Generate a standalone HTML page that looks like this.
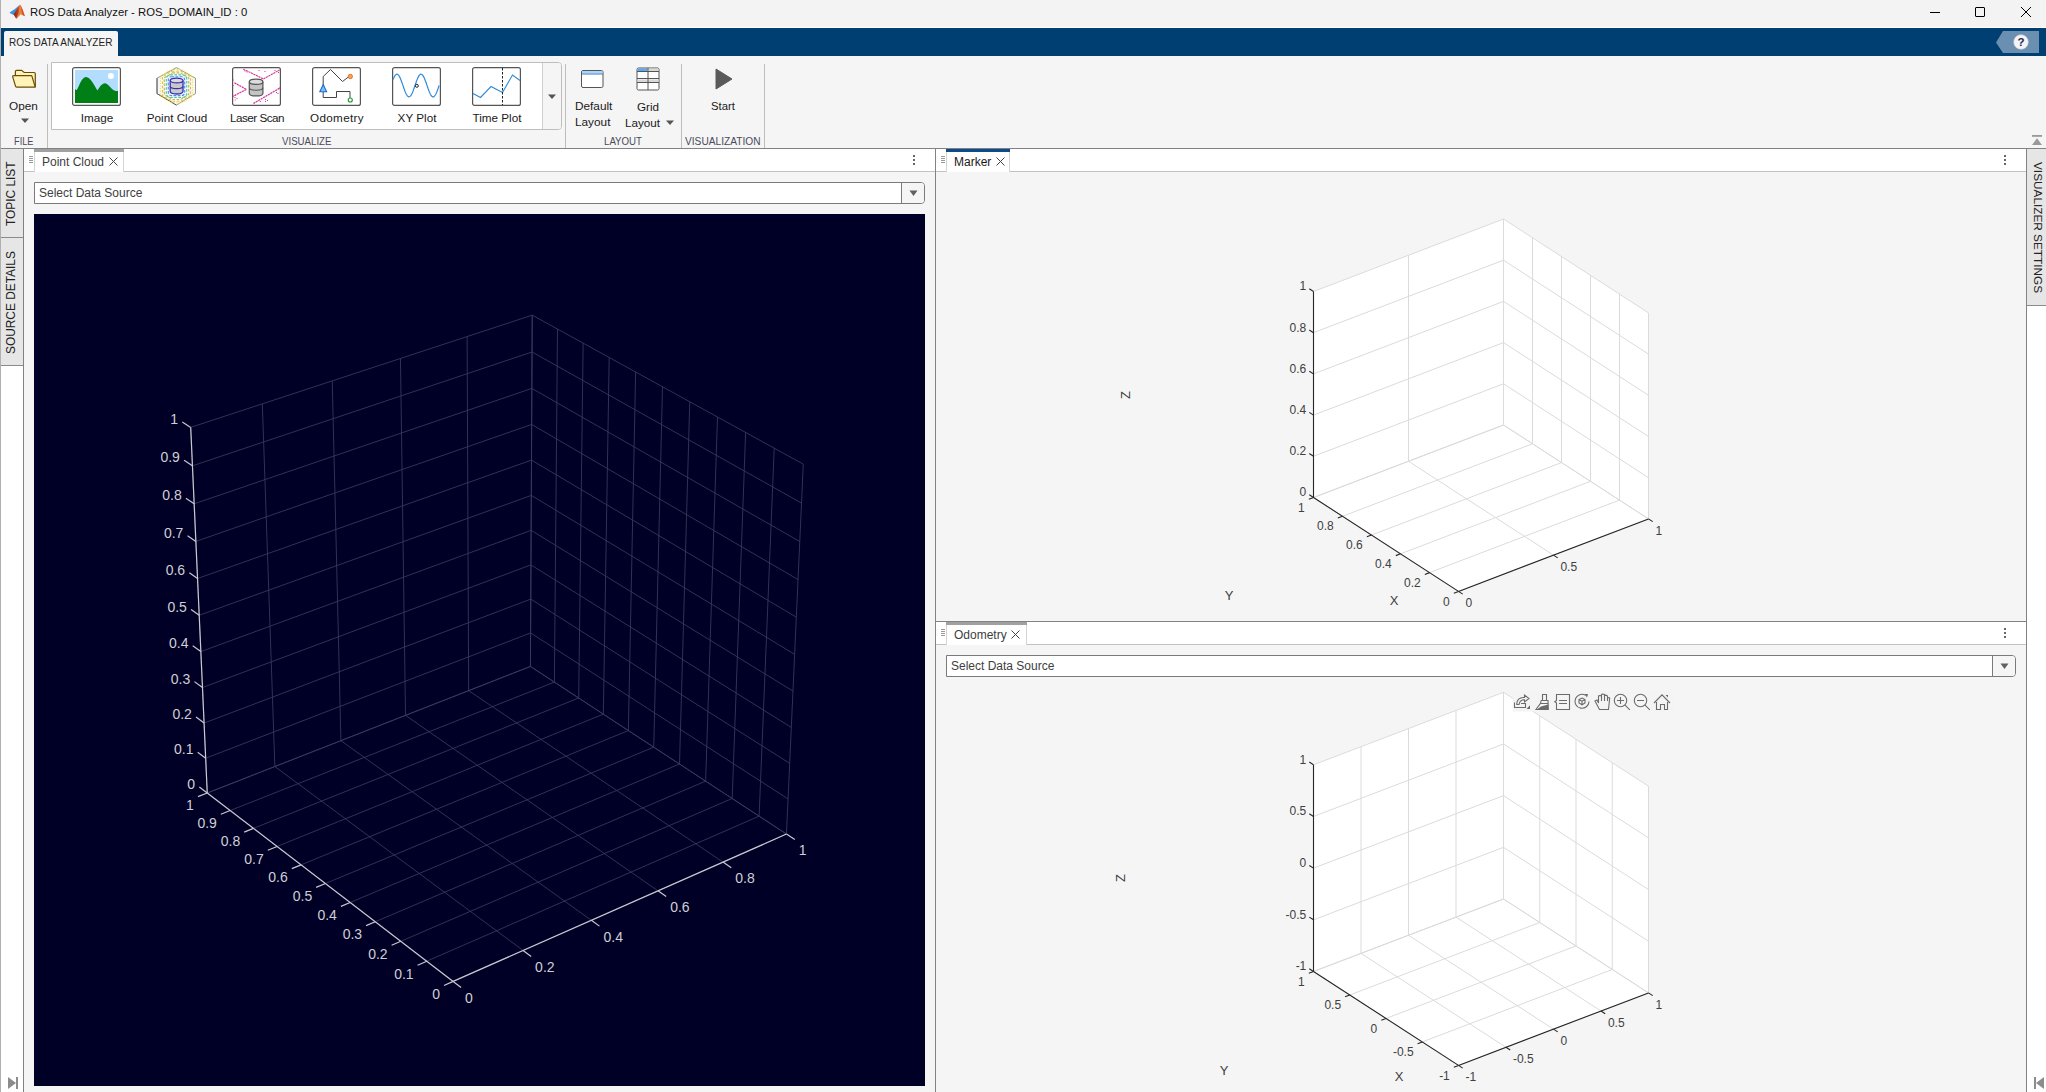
<!DOCTYPE html><html><head><meta charset="utf-8"><style>
*{margin:0;padding:0;box-sizing:border-box}
html,body{width:2046px;height:1092px;overflow:hidden;background:#f5f5f5;font-family:"Liberation Sans",sans-serif;color:#1a1a1a}
.a{position:absolute}
.t{position:absolute;white-space:nowrap;line-height:1}
</style></head><body>
<div class="a" style="left:0;top:0;width:2046px;height:27px;background:#f3f3f3"></div>
<div class="a" style="left:0;top:27px;width:2046px;height:1px;background:#ffffff"></div>
<svg class="a" style="left:6px;top:2px" width="24" height="20" viewBox="6 2 24 20">
<defs><linearGradient id="lg1" x1="0" y1="0" x2="1" y2="0"><stop offset="0" stop-color="#8a1c14"/><stop offset="0.55" stop-color="#c0401e"/><stop offset="1" stop-color="#ec8a3e"/></linearGradient></defs>
<path d="M9.4 12.7 C11 11.2 13 10.6 14.6 9.3 C16.5 7.8 18 6.2 19.5 5 L15.2 13.8 L13.8 15 C12.3 14.3 10.8 13.5 9.4 12.7 Z" fill="#3f92d8"/>
<path d="M13.6 14.6 L19.5 5 L21.5 9.5 L20.5 14.3 L16.2 18.8 C15.2 17.2 14.4 15.9 13.6 14.6 Z" fill="url(#lg1)"/>
<path d="M19.5 5 C20.2 4.6 20.6 5 21.3 6.2 C22.6 9.5 23.8 13 24.9 16.2 L20.4 14.2 L16.2 18.8 L18.8 12.5 Z" fill="#e9813c"/>
<path d="M21.3 6.2 C22.6 9.5 23.8 13 24.9 16.2 L22.8 15 L21.4 10 Z" fill="#d64f22"/>
</svg>
<div class="t" style="left:30px;top:7px;font-size:11.3px;color:#111">ROS Data Analyzer - ROS_DOMAIN_ID : 0</div>
<div class="a" style="left:1930px;top:12px;width:10px;height:1px;background:#000"></div>
<div class="a" style="left:1975px;top:7px;width:10px;height:10px;border:1px solid #000;border-radius:1px"></div>
<svg class="a" style="left:2020px;top:6px" width="12" height="12" viewBox="0 0 12 12"><path d="M1 1L11 11M11 1L1 11" stroke="#000" stroke-width="1"/></svg>
<div class="a" style="left:1px;top:28px;width:2045px;height:28px;background:#003f71"></div>
<div class="a" style="left:4px;top:31px;width:114px;height:25px;background:#f5f5f5;border-radius:2px 2px 0 0"></div>
<div class="t" style="left:9px;top:38px;font-size:10px;color:#222">ROS DATA ANALYZER</div>
<svg class="a" style="left:1995px;top:31px" width="45" height="23" viewBox="0 0 45 23">
<path d="M1 11.5 L8 0 L44 0 L44 22 L8 22 Z" fill="#6b8fb1"/>
<circle cx="26" cy="11" r="7.3" fill="#f4f4f6" stroke="#c8ccd6" stroke-width="0.6"/>
<text x="26" y="15.2" text-anchor="middle" font-family="Liberation Sans" font-weight="bold" font-size="11.5" fill="#1c2a4a">?</text>
</svg>
<div class="a" style="left:0;top:0;width:1px;height:1092px;background:#b0b0b0"></div>
<div class="a" style="left:1px;top:56px;width:2045px;height:92px;background:#f5f5f5"></div>
<div class="a" style="left:1px;top:148px;width:2045px;height:1px;background:#828282"></div>
<div class="a" style="left:47px;top:64px;width:1px;height:84px;background:#bdbdbd"></div>
<div class="a" style="left:565px;top:64px;width:1px;height:84px;background:#bdbdbd"></div>
<div class="a" style="left:681px;top:64px;width:1px;height:84px;background:#bdbdbd"></div>
<div class="a" style="left:764px;top:64px;width:1px;height:84px;background:#bdbdbd"></div>
<svg class="a" style="left:8px;top:64px" width="32" height="28" viewBox="0 0 32 28">
<path d="M7.4 12 L7.4 7.6 Q7.4 6.4 8.6 6.4 L13.6 6.4 L16.2 8.5 L26.1 8.5 Q27.3 8.5 27.3 9.7 L27.3 23" fill="#fff3b8" stroke="#6b4c00" stroke-width="1.2"/>
<path d="M4.7 12.8 Q4.5 11.7 5.7 11.7 L23.2 11.7 Q23.8 11.7 24 12.4 L27.2 23.1 L8.7 23.1 Q7.7 23.1 7.5 22.2 Z" fill="#fff3b8" stroke="#6b4c00" stroke-width="1.2" stroke-linejoin="round"/>
</svg>
<div class="t" style="left:9px;top:101px;font-size:11.8px">Open</div>
<svg class="a" style="left:20px;top:118px" width="10" height="6"><path d="M1 0.5L9 0.5L5 5Z" fill="#555"/></svg>
<div class="t" style="left:14px;top:136px;font-size:11px;color:#4a4a5a;transform:scaleX(0.84);transform-origin:0 0">FILE</div>
<div class="a" style="left:51px;top:62px;width:511px;height:68px;background:#fff;border:1px solid #bdbdbd;border-radius:0 4px 4px 0"></div>
<div class="a" style="left:542px;top:63px;width:19px;height:66px;background:#f5f5f5;border-left:1px solid #d0d0d0;border-radius:0 3px 3px 0"></div>
<svg class="a" style="left:547px;top:94px" width="10" height="6"><path d="M1 0.5L9 0.5L5 5Z" fill="#555"/></svg>
<svg class="a" style="left:72px;top:67px" width="49" height="39" viewBox="0 0 49 39">
<rect x="0.6" y="0.6" width="47.8" height="37.8" rx="2" fill="#fff" stroke="#555" stroke-width="1.2"/>
<rect x="3" y="3" width="43" height="33" fill="#b3ddfe"/>
<circle cx="38.9" cy="9.1" r="3" fill="#fff"/>
<path d="M3 22 C3.8 22.6 4.2 23.2 4.8 23 C7 20 9.5 10.2 13.9 10.1 C18.5 10 23 19.5 25.4 23.6 C27.5 20 30 16.2 32.9 16.2 C35.5 16.2 38.5 20.5 40.7 22.6 C42.5 24 44.5 24.2 46 24 L46 36 L3 36 Z" fill="#007f16"/>
</svg>
<svg class="a" style="left:156px;top:67px" width="41" height="39" viewBox="0 0 41 39">
<path d="M20.4 0.6 L39.5 11.2 L39.5 26.6 L20.4 38.1 L1 26.6 L1 11.2 Z" fill="#f6f6fb" stroke="#8a8a8a" stroke-width="0.9"/>
<path d="M1 11.2 L1 26.6 L20.4 38.1" fill="none" stroke="#555" stroke-width="0.9"/>
<path d="M15.38 2.60 L25.62 2.60 L36.50 9.10 L36.50 29.30 L25.62 35.80 L15.38 35.80 L4.50 29.30 L4.50 9.10 Z" fill="none" stroke="#f2ee30" stroke-width="1.1" stroke-dasharray="1.2 1.4" stroke-linejoin="round"/>
<path d="M16.02 4.20 L24.98 4.20 L34.50 9.70 L34.50 28.70 L24.98 34.20 L16.02 34.20 L6.50 28.70 L6.50 9.70 Z" fill="none" stroke="#f7b63e" stroke-width="1.1" stroke-dasharray="2.5 1.8" stroke-linejoin="round"/>
<path d="M16.60 5.90 L24.40 5.90 L32.70 10.90 L32.70 27.50 L24.40 32.50 L16.60 32.50 L8.30 27.50 L8.30 10.90 Z" fill="none" stroke="#a9c63e" stroke-width="1.1" stroke-dasharray="2.5 1.6" stroke-linejoin="round"/>
<rect x="10.30" y="7.90" width="20.40" height="22.60" rx="4.0" fill="none" stroke="#4ec79a" stroke-width="1.1" stroke-dasharray="2.6 1.5"/>
<rect x="12.30" y="9.80" width="16.40" height="18.80" rx="3.0" fill="none" stroke="#3d8ff5" stroke-width="1.1" stroke-dasharray="2.8 1.4"/>
<path d="M14.2 13.5 L14.2 24.6 A6.4 2.4 0 0 0 27 24.6 L27 13.5" fill="#c9c9c9" stroke="#3a2fb0" stroke-width="1.3"/>
<path d="M14.2 19.3 A6.4 2.4 0 0 0 27 19.3" fill="none" stroke="#3a2fb0" stroke-width="1.2"/>
<ellipse cx="20.6" cy="13.5" rx="6.4" ry="2.4" fill="#dadada" stroke="#3a2fb0" stroke-width="1.3"/>
</svg>
<svg class="a" style="left:232px;top:67px" width="49" height="39" viewBox="0 0 49 39">
<rect x="0.6" y="0.6" width="47.8" height="37.8" rx="2" fill="#fff" stroke="#555" stroke-width="1.2"/>
<path d="M11.3 2.2 L31.5 11.9 L47.6 3" fill="none" stroke="#d8309a" stroke-width="1.1" stroke-dasharray="2.2 0.6"/>
<path d="M2.4 15.8 L14.5 22.4 L1 29.3" fill="none" stroke="#d8309a" stroke-width="1.2" stroke-dasharray="2.2 0.6"/>
<path d="M21.4 36.5 L47.6 21.2" fill="none" stroke="#d8309a" stroke-width="1.2" stroke-dasharray="2.2 0.6"/>
<rect x="12.5" y="3.5" width="1" height="1" fill="#d8309a"/><rect x="14.5" y="4.5" width="1" height="1" fill="#d8309a"/><rect x="26.5" y="3.0" width="1" height="1" fill="#d8309a"/><rect x="32.5" y="4.0" width="1" height="1" fill="#d8309a"/><rect x="42.5" y="3.0" width="1" height="1" fill="#d8309a"/><rect x="46.0" y="5.0" width="1" height="1" fill="#d8309a"/><rect x="0.7" y="12.5" width="1" height="1" fill="#d8309a"/><rect x="0.7" y="18.0" width="1" height="1" fill="#d8309a"/><rect x="2.5" y="30.0" width="1" height="1" fill="#d8309a"/><rect x="4.5" y="31.0" width="1" height="1" fill="#d8309a"/><rect x="2.7" y="32.5" width="1" height="1" fill="#d8309a"/><rect x="27.8" y="34.0" width="1" height="1" fill="#d8309a"/><rect x="33.0" y="32.0" width="1" height="1" fill="#d8309a"/><rect x="33.0" y="34.0" width="1" height="1" fill="#d8309a"/><rect x="35.0" y="33.0" width="1" height="1" fill="#d8309a"/><rect x="44.0" y="25.0" width="1" height="1" fill="#d8309a"/><rect x="45.5" y="26.0" width="1" height="1" fill="#d8309a"/><rect x="47.0" y="20.5" width="1" height="1" fill="#d8309a"/>
<path d="M17.3 14.8 L17.3 26.4 A6.8 2.5 0 0 0 30.9 26.4 L30.9 14.8" fill="#c4c4c4" stroke="#555" stroke-width="1.2"/>
<path d="M17.3 20.8 A6.8 2.5 0 0 0 30.9 20.8" fill="none" stroke="#555" stroke-width="1.1"/>
<ellipse cx="24.1" cy="14.8" rx="6.8" ry="2.6" fill="#dcdcdc" stroke="#555" stroke-width="1.2"/>
</svg>
<svg class="a" style="left:312px;top:67px" width="49" height="39" viewBox="0 0 49 39">
<rect x="0.6" y="0.6" width="47.8" height="37.8" rx="2" fill="#fff" stroke="#555" stroke-width="1.2"/>
<path d="M11.2 25 L11.2 30.5 L24.5 30.5 L24.5 24.5 L38 24.5 L38 31" fill="none" stroke="#444" stroke-width="1"/>
<path d="M11.2 18 L11.2 9.5 L18.5 2.5 L30.5 14.5 L37 9.5" fill="none" stroke="#444" stroke-width="1"/>
<path d="M11.2 17.5 L14.6 24.8 L7.8 24.8 Z" fill="#7cc3f5" stroke="#1a6ad0" stroke-width="1.1"/>
<circle cx="38.3" cy="9.5" r="2.2" fill="#f0a060" stroke="#e8782e" stroke-width="1"/>
<circle cx="38.3" cy="33" r="2" fill="#fff" stroke="#2a9a3a" stroke-width="1.2"/>
</svg>
<svg class="a" style="left:392px;top:67px" width="49" height="39" viewBox="0 0 49 39">
<rect x="0.6" y="0.6" width="47.8" height="37.8" rx="2" fill="#fff" stroke="#555" stroke-width="1.2"/>
<polyline points="1.00,12.59 1.48,11.44 1.96,10.39 2.44,9.47 2.92,8.70 3.40,8.07 3.88,7.61 4.36,7.32 4.84,7.20 5.32,7.26 5.80,7.50 6.28,7.91 6.76,8.48 7.24,9.21 7.72,10.09 8.20,11.09 8.68,12.22 9.16,13.44 9.64,14.74 10.12,16.10 10.60,17.50 11.08,18.91 11.56,20.31 12.04,21.69 12.52,23.02 13.00,24.28 13.48,25.44 13.96,26.50 14.44,27.44 14.92,28.23 15.40,28.87 15.88,29.35 16.36,29.66 16.84,29.79 17.32,29.75 17.80,29.53 18.28,29.14 18.76,28.59 19.24,27.87 19.72,27.01 20.20,26.02 20.68,24.91 21.16,23.70 21.64,22.40 22.12,21.05 22.60,19.65 23.08,18.24 23.56,16.84 24.04,15.45 24.52,14.12 25.00,12.85 25.48,11.68 25.96,10.61 26.44,9.66 26.92,8.85 27.40,8.19 27.88,7.69 28.36,7.37 28.84,7.21 29.32,7.23 29.80,7.43 30.28,7.81 30.76,8.34 31.24,9.04 31.72,9.89 32.20,10.87 32.68,11.97 33.16,13.17 33.64,14.46 34.12,15.80 34.60,17.19 35.08,18.61 35.56,20.02 36.04,21.40 36.52,22.74 37.00,24.02 37.48,25.20 37.96,26.29 38.44,27.25 38.92,28.07 39.40,28.75 39.88,29.26 40.36,29.61 40.84,29.78 41.32,29.78 41.80,29.60 42.28,29.24 42.76,28.72 43.24,28.04 43.72,27.21 44.20,26.24 44.68,25.15 45.16,23.96 45.64,22.68 46.12,21.34 46.60,19.95 47.08,18.55" fill="none" stroke="#2f8bd8" stroke-width="1.2"/>
<circle cx="24.8" cy="18.8" r="1.5" fill="#fff" stroke="#222" stroke-width="1"/>
</svg>
<svg class="a" style="left:472px;top:67px" width="49" height="39" viewBox="0 0 49 39">
<rect x="0.6" y="0.6" width="47.8" height="37.8" rx="2" fill="#fff" stroke="#555" stroke-width="1.2"/>
<polyline points="1,26.5 8.5,30.5 19,19.5 30.5,25.5 40.5,8 48,13.5" fill="none" stroke="#2f8bd8" stroke-width="1.1"/>
<line x1="30.5" y1="1" x2="30.5" y2="38" stroke="#222" stroke-width="1" stroke-dasharray="2.5 1.5"/>
</svg>
<div class="t" style="left:97px;top:112px;width:80px;margin-left:-40px;text-align:center;font-size:11.7px;letter-spacing:0px">Image</div>
<div class="t" style="left:177px;top:112px;width:80px;margin-left:-40px;text-align:center;font-size:11.7px;letter-spacing:0px">Point Cloud</div>
<div class="t" style="left:257px;top:112px;width:80px;margin-left:-40px;text-align:center;font-size:11.7px;letter-spacing:-0.5px">Laser Scan</div>
<div class="t" style="left:337px;top:112px;width:80px;margin-left:-40px;text-align:center;font-size:11.7px;letter-spacing:0.32px">Odometry</div>
<div class="t" style="left:417px;top:112px;width:80px;margin-left:-40px;text-align:center;font-size:11.7px;letter-spacing:0px">XY Plot</div>
<div class="t" style="left:497px;top:112px;width:80px;margin-left:-40px;text-align:center;font-size:11.7px;letter-spacing:0px">Time Plot</div>
<div class="t" style="left:282px;top:136px;font-size:11px;color:#4a4a5a;transform:scaleX(0.88);transform-origin:0 0">VISUALIZE</div>
<svg class="a" style="left:580px;top:69px" width="25" height="20" viewBox="0 0 25 20">
<rect x="1.5" y="1.5" width="21.5" height="17" rx="1.5" fill="#fff" stroke="#555" stroke-width="1"/>
<rect x="2" y="2" width="20.5" height="2.5" fill="#a9d5fb"/>
<line x1="1.5" y1="5" x2="23" y2="5" stroke="#3a78c8" stroke-width="1"/>
</svg>
<div class="t" style="left:575px;top:101px;font-size:11.8px">Default</div>
<div class="t" style="left:575px;top:117px;font-size:11.8px">Layout</div>
<svg class="a" style="left:636px;top:67px" width="25" height="25" viewBox="0 0 25 25">
<rect x="1" y="1" width="22" height="22" rx="1.5" fill="#fff" stroke="#555" stroke-width="1"/>
<rect x="1.5" y="1.5" width="10" height="2.5" fill="#5aa8ee"/>
<rect x="12.5" y="1.5" width="10" height="2.5" fill="#d8d8d8"/>
<rect x="1.5" y="12.5" width="21" height="2.5" fill="#d8d8d8"/>
<line x1="1" y1="4.5" x2="23" y2="4.5" stroke="#555" stroke-width="1"/>
<line x1="1" y1="11.5" x2="23" y2="11.5" stroke="#555" stroke-width="1"/>
<line x1="1" y1="15.5" x2="23" y2="15.5" stroke="#555" stroke-width="1"/>
<line x1="12" y1="1" x2="12" y2="23" stroke="#555" stroke-width="1"/>
</svg>
<div class="t" style="left:637px;top:101px;font-size:11.7px">Grid</div>
<div class="t" style="left:625px;top:117px;font-size:11.7px">Layout</div>
<svg class="a" style="left:665px;top:120px" width="10" height="6"><path d="M1 0.5L9 0.5L5 5Z" fill="#555"/></svg>
<div class="t" style="left:604px;top:136px;font-size:11px;color:#4a4a5a;transform:scaleX(0.88);transform-origin:0 0">LAYOUT</div>
<svg class="a" style="left:714px;top:68px" width="20" height="22"><path d="M2 1L18 11L2 21Z" fill="#5a5a5a" stroke="#5a5a5a" stroke-width="1" stroke-linejoin="round"/></svg>
<div class="t" style="left:711px;top:101px;font-size:11.3px">Start</div>
<div class="t" style="left:685px;top:136px;font-size:11px;color:#4a4a5a;transform:scaleX(0.925);transform-origin:0 0">VISUALIZATION</div>
<svg class="a" style="left:2031px;top:135px" width="12" height="12"><rect x="1" y="0" width="10" height="1.8" fill="#999"/><path d="M1 10L11 10L6 3.2Z" fill="#999"/></svg>
<div class="a" style="left:1px;top:149px;width:22px;height:943px;background:#fff"></div>
<div class="a" style="left:1px;top:149px;width:22px;height:89px;background:#e6e6e6;border-bottom:1px solid #8a8a8a"></div>
<div class="a" style="left:1px;top:238px;width:22px;height:128px;background:#e6e6e6;border-bottom:1px solid #8a8a8a"></div>
<div class="a" style="left:23px;top:149px;width:1px;height:943px;background:#828282"></div>
<div class="t" style="left:5.5px;top:225.5px;font-size:11.9px;transform:rotate(-90deg);transform-origin:0 0;color:#222">TOPIC LIST</div>
<div class="t" style="left:5.5px;top:353.5px;font-size:11.9px;transform:rotate(-90deg);transform-origin:0 0;color:#222">SOURCE DETAILS</div>
<svg class="a" style="left:7px;top:1076px" width="12" height="14"><path d="M1 1L9 7L1 13Z" fill="#8c8c8c"/><rect x="9" y="1" width="2" height="12" fill="#8c8c8c"/></svg>
<div class="a" style="left:24px;top:149px;width:911px;height:23px;background:#fff;border-bottom:1px solid #c2c2c2"></div>
<div class="a" style="left:29px;top:156px;width:4px;height:1px;background:#9a9a9a"></div>
<div class="a" style="left:29px;top:158px;width:4px;height:1px;background:#9a9a9a"></div>
<div class="a" style="left:29px;top:160px;width:4px;height:1px;background:#9a9a9a"></div>
<div class="a" style="left:29px;top:162px;width:4px;height:1px;background:#9a9a9a"></div>
<div class="a" style="left:34px;top:149px;width:90px;height:23px;background:#fff;border-left:1px solid #d4d4d4;border-right:1px solid #d4d4d4"></div>
<div class="a" style="left:34px;top:149px;width:90px;height:3px;background:#a0a0a0"></div>
<div class="t" style="left:42px;top:156px;font-size:12px;color:#404040">Point Cloud</div>
<svg class="a" style="left:109px;top:157px" width="9" height="9"><path d="M0.5 0.5L8.5 8.5M8.5 0.5L0.5 8.5" stroke="#444" stroke-width="1"/></svg>
<div class="a" style="left:913px;top:155px;width:2px;height:2px;background:#666"></div>
<div class="a" style="left:913px;top:159px;width:2px;height:2px;background:#666"></div>
<div class="a" style="left:913px;top:163px;width:2px;height:2px;background:#666"></div>
<div class="a" style="left:34px;top:182px;width:891px;height:22px;background:#fff;border:1px solid #7a7a7a;border-radius:0 4px 4px 0"></div>
<div class="a" style="left:901px;top:183px;width:23px;height:20px;background:#f5f5f5;border-left:1px solid #7a7a7a;border-radius:0 3px 3px 0"></div>
<svg class="a" style="left:909px;top:190px" width="10" height="7"><path d="M0.5 0.5L8.5 0.5L4.5 6Z" fill="#606060"/></svg>
<div class="t" style="left:39px;top:187px;font-size:12px;color:#404040">Select Data Source</div>
<div class="a" style="left:935px;top:149px;width:1px;height:943px;background:#828282"></div>
<div class="a" style="left:936px;top:149px;width:1090px;height:23px;background:#fff;border-bottom:1px solid #c2c2c2"></div>
<div class="a" style="left:941px;top:156px;width:4px;height:1px;background:#9a9a9a"></div>
<div class="a" style="left:941px;top:158px;width:4px;height:1px;background:#9a9a9a"></div>
<div class="a" style="left:941px;top:160px;width:4px;height:1px;background:#9a9a9a"></div>
<div class="a" style="left:941px;top:162px;width:4px;height:1px;background:#9a9a9a"></div>
<div class="a" style="left:946px;top:149px;width:64px;height:23px;background:#fff;border-left:1px solid #d4d4d4;border-right:1px solid #d4d4d4"></div>
<div class="a" style="left:946px;top:149px;width:64px;height:3px;background:#0b4b8a"></div>
<div class="t" style="left:954px;top:156px;font-size:12px;color:#1a1a1a">Marker</div>
<svg class="a" style="left:996px;top:157px" width="9" height="9"><path d="M0.5 0.5L8.5 8.5M8.5 0.5L0.5 8.5" stroke="#444" stroke-width="1"/></svg>
<div class="a" style="left:2004px;top:155px;width:2px;height:2px;background:#666"></div>
<div class="a" style="left:2004px;top:159px;width:2px;height:2px;background:#666"></div>
<div class="a" style="left:2004px;top:163px;width:2px;height:2px;background:#666"></div>
<div class="a" style="left:936px;top:621px;width:1090px;height:1px;background:#828282"></div>
<div class="a" style="left:936px;top:622px;width:1090px;height:23px;background:#fff;border-bottom:1px solid #c2c2c2"></div>
<div class="a" style="left:941px;top:629px;width:4px;height:1px;background:#9a9a9a"></div>
<div class="a" style="left:941px;top:631px;width:4px;height:1px;background:#9a9a9a"></div>
<div class="a" style="left:941px;top:633px;width:4px;height:1px;background:#9a9a9a"></div>
<div class="a" style="left:941px;top:635px;width:4px;height:1px;background:#9a9a9a"></div>
<div class="a" style="left:946px;top:622px;width:81px;height:23px;background:#fff;border-left:1px solid #d4d4d4;border-right:1px solid #d4d4d4"></div>
<div class="a" style="left:946px;top:622px;width:81px;height:3px;background:#a0a0a0"></div>
<div class="t" style="left:954px;top:629px;font-size:12px;color:#404040">Odometry</div>
<svg class="a" style="left:1011px;top:630px" width="9" height="9"><path d="M0.5 0.5L8.5 8.5M8.5 0.5L0.5 8.5" stroke="#444" stroke-width="1"/></svg>
<div class="a" style="left:2004px;top:628px;width:2px;height:2px;background:#666"></div>
<div class="a" style="left:2004px;top:632px;width:2px;height:2px;background:#666"></div>
<div class="a" style="left:2004px;top:636px;width:2px;height:2px;background:#666"></div>
<div class="a" style="left:946px;top:655px;width:1070px;height:22px;background:#fff;border:1px solid #7a7a7a;border-radius:0 4px 4px 0"></div>
<div class="a" style="left:1992px;top:656px;width:23px;height:20px;background:#f5f5f5;border-left:1px solid #7a7a7a;border-radius:0 3px 3px 0"></div>
<svg class="a" style="left:2000px;top:663px" width="10" height="7"><path d="M0.5 0.5L8.5 0.5L4.5 6Z" fill="#606060"/></svg>
<div class="t" style="left:951px;top:660px;font-size:12px;color:#404040">Select Data Source</div>
<div class="a" style="left:2026px;top:149px;width:1px;height:943px;background:#828282"></div>
<div class="a" style="left:2027px;top:149px;width:19px;height:943px;background:#fff"></div>
<div class="a" style="left:2027px;top:149px;width:19px;height:157px;background:#e6e6e6;border-bottom:1px solid #8a8a8a"></div>
<div class="t" style="left:2043px;top:162px;font-size:11.8px;transform:rotate(90deg);transform-origin:0 0;color:#222">VISUALIZER SETTINGS</div>
<svg class="a" style="left:2033px;top:1076px" width="12" height="14"><path d="M11 1L3 7L11 13Z" fill="#8c8c8c"/><rect x="1" y="1" width="2" height="12" fill="#8c8c8c"/></svg>
<svg class="a" style="left:0;top:0" width="2046" height="1092" viewBox="0 0 2046 1092">
<rect x="34" y="214" width="891" height="872" fill="#000026"/>
<line x1="207.25" y1="793.00" x2="530.43" y2="666.44" stroke="#3a3a5c" stroke-width="0.85"/>
<line x1="786.46" y1="834.05" x2="530.43" y2="666.44" stroke="#3a3a5c" stroke-width="0.85"/>
<line x1="205.68" y1="758.23" x2="530.60" y2="632.93" stroke="#3a3a5c" stroke-width="0.85"/>
<line x1="788.06" y1="798.90" x2="530.60" y2="632.93" stroke="#3a3a5c" stroke-width="0.85"/>
<line x1="204.09" y1="723.07" x2="530.77" y2="599.08" stroke="#3a3a5c" stroke-width="0.85"/>
<line x1="789.68" y1="763.36" x2="530.77" y2="599.08" stroke="#3a3a5c" stroke-width="0.85"/>
<line x1="202.48" y1="687.53" x2="530.95" y2="564.88" stroke="#3a3a5c" stroke-width="0.85"/>
<line x1="791.32" y1="727.42" x2="530.95" y2="564.88" stroke="#3a3a5c" stroke-width="0.85"/>
<line x1="200.85" y1="651.60" x2="531.12" y2="530.32" stroke="#3a3a5c" stroke-width="0.85"/>
<line x1="792.97" y1="691.08" x2="531.12" y2="530.32" stroke="#3a3a5c" stroke-width="0.85"/>
<line x1="199.21" y1="615.27" x2="531.30" y2="495.40" stroke="#3a3a5c" stroke-width="0.85"/>
<line x1="794.64" y1="654.33" x2="531.30" y2="495.40" stroke="#3a3a5c" stroke-width="0.85"/>
<line x1="197.54" y1="578.53" x2="531.48" y2="460.11" stroke="#3a3a5c" stroke-width="0.85"/>
<line x1="796.33" y1="617.16" x2="531.48" y2="460.11" stroke="#3a3a5c" stroke-width="0.85"/>
<line x1="195.86" y1="541.38" x2="531.66" y2="424.45" stroke="#3a3a5c" stroke-width="0.85"/>
<line x1="798.04" y1="579.56" x2="531.66" y2="424.45" stroke="#3a3a5c" stroke-width="0.85"/>
<line x1="194.16" y1="503.82" x2="531.85" y2="388.41" stroke="#3a3a5c" stroke-width="0.85"/>
<line x1="799.77" y1="541.53" x2="531.85" y2="388.41" stroke="#3a3a5c" stroke-width="0.85"/>
<line x1="192.44" y1="465.82" x2="532.03" y2="351.98" stroke="#3a3a5c" stroke-width="0.85"/>
<line x1="801.52" y1="503.07" x2="532.03" y2="351.98" stroke="#3a3a5c" stroke-width="0.85"/>
<line x1="190.70" y1="427.39" x2="532.22" y2="315.16" stroke="#3a3a5c" stroke-width="0.85"/>
<line x1="803.29" y1="464.15" x2="532.22" y2="315.16" stroke="#3a3a5c" stroke-width="0.85"/>
<line x1="207.25" y1="793.00" x2="190.70" y2="427.39" stroke="#3a3a5c" stroke-width="0.85"/>
<line x1="453.14" y1="981.40" x2="207.25" y2="793.00" stroke="#3a3a5c" stroke-width="0.85"/>
<line x1="274.86" y1="766.52" x2="262.32" y2="403.86" stroke="#3a3a5c" stroke-width="0.85"/>
<line x1="523.11" y1="950.47" x2="274.86" y2="766.52" stroke="#3a3a5c" stroke-width="0.85"/>
<line x1="340.92" y1="740.65" x2="332.22" y2="380.89" stroke="#3a3a5c" stroke-width="0.85"/>
<line x1="591.37" y1="920.30" x2="340.92" y2="740.65" stroke="#3a3a5c" stroke-width="0.85"/>
<line x1="405.51" y1="715.36" x2="400.46" y2="358.46" stroke="#3a3a5c" stroke-width="0.85"/>
<line x1="657.97" y1="890.86" x2="405.51" y2="715.36" stroke="#3a3a5c" stroke-width="0.85"/>
<line x1="468.66" y1="690.63" x2="467.11" y2="336.56" stroke="#3a3a5c" stroke-width="0.85"/>
<line x1="722.99" y1="862.12" x2="468.66" y2="690.63" stroke="#3a3a5c" stroke-width="0.85"/>
<line x1="530.43" y1="666.44" x2="532.22" y2="315.16" stroke="#3a3a5c" stroke-width="0.85"/>
<line x1="786.46" y1="834.05" x2="530.43" y2="666.44" stroke="#3a3a5c" stroke-width="0.85"/>
<line x1="786.46" y1="834.05" x2="803.29" y2="464.15" stroke="#3a3a5c" stroke-width="0.85"/>
<line x1="453.14" y1="981.40" x2="786.46" y2="834.05" stroke="#3a3a5c" stroke-width="0.85"/>
<line x1="759.12" y1="816.15" x2="774.23" y2="448.18" stroke="#3a3a5c" stroke-width="0.85"/>
<line x1="426.77" y1="961.20" x2="759.12" y2="816.15" stroke="#3a3a5c" stroke-width="0.85"/>
<line x1="732.18" y1="798.51" x2="745.63" y2="432.46" stroke="#3a3a5c" stroke-width="0.85"/>
<line x1="400.82" y1="941.32" x2="732.18" y2="798.51" stroke="#3a3a5c" stroke-width="0.85"/>
<line x1="705.64" y1="781.14" x2="717.48" y2="416.99" stroke="#3a3a5c" stroke-width="0.85"/>
<line x1="375.28" y1="921.75" x2="705.64" y2="781.14" stroke="#3a3a5c" stroke-width="0.85"/>
<line x1="679.50" y1="764.03" x2="689.77" y2="401.76" stroke="#3a3a5c" stroke-width="0.85"/>
<line x1="350.15" y1="902.49" x2="679.50" y2="764.03" stroke="#3a3a5c" stroke-width="0.85"/>
<line x1="653.74" y1="747.17" x2="662.49" y2="386.76" stroke="#3a3a5c" stroke-width="0.85"/>
<line x1="325.40" y1="883.53" x2="653.74" y2="747.17" stroke="#3a3a5c" stroke-width="0.85"/>
<line x1="628.36" y1="730.55" x2="635.64" y2="372.00" stroke="#3a3a5c" stroke-width="0.85"/>
<line x1="301.04" y1="864.86" x2="628.36" y2="730.55" stroke="#3a3a5c" stroke-width="0.85"/>
<line x1="603.34" y1="714.17" x2="609.19" y2="357.47" stroke="#3a3a5c" stroke-width="0.85"/>
<line x1="277.06" y1="846.48" x2="603.34" y2="714.17" stroke="#3a3a5c" stroke-width="0.85"/>
<line x1="578.69" y1="698.03" x2="583.14" y2="343.15" stroke="#3a3a5c" stroke-width="0.85"/>
<line x1="253.43" y1="828.38" x2="578.69" y2="698.03" stroke="#3a3a5c" stroke-width="0.85"/>
<line x1="554.39" y1="682.12" x2="557.49" y2="329.05" stroke="#3a3a5c" stroke-width="0.85"/>
<line x1="230.17" y1="810.56" x2="554.39" y2="682.12" stroke="#3a3a5c" stroke-width="0.85"/>
<line x1="530.43" y1="666.44" x2="532.22" y2="315.16" stroke="#3a3a5c" stroke-width="0.85"/>
<line x1="207.25" y1="793.00" x2="530.43" y2="666.44" stroke="#3a3a5c" stroke-width="0.85"/>
<line x1="207.25" y1="793.00" x2="190.70" y2="427.39" stroke="#c8c8d0" stroke-width="1.2"/>
<line x1="453.14" y1="981.40" x2="207.25" y2="793.00" stroke="#c8c8d0" stroke-width="1.2"/>
<line x1="453.14" y1="981.40" x2="786.46" y2="834.05" stroke="#c8c8d0" stroke-width="1.2"/>
<line x1="207.25" y1="793.00" x2="199.32" y2="786.92" stroke="#c8c8d0" stroke-width="1.2"/>
<line x1="205.68" y1="758.23" x2="197.70" y2="752.20" stroke="#c8c8d0" stroke-width="1.2"/>
<line x1="204.09" y1="723.07" x2="196.06" y2="717.10" stroke="#c8c8d0" stroke-width="1.2"/>
<line x1="202.48" y1="687.53" x2="194.41" y2="681.62" stroke="#c8c8d0" stroke-width="1.2"/>
<line x1="200.85" y1="651.60" x2="192.74" y2="645.75" stroke="#c8c8d0" stroke-width="1.2"/>
<line x1="199.21" y1="615.27" x2="191.05" y2="609.48" stroke="#c8c8d0" stroke-width="1.2"/>
<line x1="197.54" y1="578.53" x2="189.34" y2="572.81" stroke="#c8c8d0" stroke-width="1.2"/>
<line x1="195.86" y1="541.38" x2="187.61" y2="535.73" stroke="#c8c8d0" stroke-width="1.2"/>
<line x1="194.16" y1="503.82" x2="185.87" y2="498.23" stroke="#c8c8d0" stroke-width="1.2"/>
<line x1="192.44" y1="465.82" x2="184.10" y2="460.30" stroke="#c8c8d0" stroke-width="1.2"/>
<line x1="190.70" y1="427.39" x2="182.31" y2="421.95" stroke="#c8c8d0" stroke-width="1.2"/>
<line x1="453.14" y1="981.40" x2="443.99" y2="985.45" stroke="#c8c8d0" stroke-width="1.2"/>
<line x1="426.77" y1="961.20" x2="417.60" y2="965.20" stroke="#c8c8d0" stroke-width="1.2"/>
<line x1="400.82" y1="941.32" x2="391.64" y2="945.27" stroke="#c8c8d0" stroke-width="1.2"/>
<line x1="375.28" y1="921.75" x2="366.08" y2="925.66" stroke="#c8c8d0" stroke-width="1.2"/>
<line x1="350.15" y1="902.49" x2="340.93" y2="906.36" stroke="#c8c8d0" stroke-width="1.2"/>
<line x1="325.40" y1="883.53" x2="316.17" y2="887.36" stroke="#c8c8d0" stroke-width="1.2"/>
<line x1="301.04" y1="864.86" x2="291.79" y2="868.66" stroke="#c8c8d0" stroke-width="1.2"/>
<line x1="277.06" y1="846.48" x2="267.79" y2="850.24" stroke="#c8c8d0" stroke-width="1.2"/>
<line x1="253.43" y1="828.38" x2="244.15" y2="832.10" stroke="#c8c8d0" stroke-width="1.2"/>
<line x1="230.17" y1="810.56" x2="220.87" y2="814.24" stroke="#c8c8d0" stroke-width="1.2"/>
<line x1="207.25" y1="793.00" x2="197.94" y2="796.64" stroke="#c8c8d0" stroke-width="1.2"/>
<line x1="453.14" y1="981.40" x2="461.08" y2="987.49" stroke="#c8c8d0" stroke-width="1.2"/>
<line x1="523.11" y1="950.47" x2="531.15" y2="956.43" stroke="#c8c8d0" stroke-width="1.2"/>
<line x1="591.37" y1="920.30" x2="599.49" y2="926.13" stroke="#c8c8d0" stroke-width="1.2"/>
<line x1="657.97" y1="890.86" x2="666.18" y2="896.56" stroke="#c8c8d0" stroke-width="1.2"/>
<line x1="722.99" y1="862.12" x2="731.28" y2="867.71" stroke="#c8c8d0" stroke-width="1.2"/>
<line x1="786.46" y1="834.05" x2="794.83" y2="839.53" stroke="#c8c8d0" stroke-width="1.2"/>
<text x="195.1" y="788.9" text-anchor="end" font-family="Liberation Sans" font-size="14" fill="#cfcfd4">0</text>
<text x="193.5" y="754.2" text-anchor="end" font-family="Liberation Sans" font-size="14" fill="#cfcfd4">0.1</text>
<text x="191.9" y="719.1" text-anchor="end" font-family="Liberation Sans" font-size="14" fill="#cfcfd4">0.2</text>
<text x="190.2" y="683.6" text-anchor="end" font-family="Liberation Sans" font-size="14" fill="#cfcfd4">0.3</text>
<text x="188.5" y="647.8" text-anchor="end" font-family="Liberation Sans" font-size="14" fill="#cfcfd4">0.4</text>
<text x="186.9" y="611.5" text-anchor="end" font-family="Liberation Sans" font-size="14" fill="#cfcfd4">0.5</text>
<text x="185.1" y="574.8" text-anchor="end" font-family="Liberation Sans" font-size="14" fill="#cfcfd4">0.6</text>
<text x="183.4" y="537.7" text-anchor="end" font-family="Liberation Sans" font-size="14" fill="#cfcfd4">0.7</text>
<text x="181.7" y="500.2" text-anchor="end" font-family="Liberation Sans" font-size="14" fill="#cfcfd4">0.8</text>
<text x="179.9" y="462.3" text-anchor="end" font-family="Liberation Sans" font-size="14" fill="#cfcfd4">0.9</text>
<text x="178.1" y="423.9" text-anchor="end" font-family="Liberation Sans" font-size="14" fill="#cfcfd4">1</text>
<text x="440.0" y="999.0" text-anchor="end" font-family="Liberation Sans" font-size="14" fill="#cfcfd4">0</text>
<text x="413.6" y="978.8" text-anchor="end" font-family="Liberation Sans" font-size="14" fill="#cfcfd4">0.1</text>
<text x="387.6" y="958.9" text-anchor="end" font-family="Liberation Sans" font-size="14" fill="#cfcfd4">0.2</text>
<text x="362.1" y="939.3" text-anchor="end" font-family="Liberation Sans" font-size="14" fill="#cfcfd4">0.3</text>
<text x="336.9" y="920.0" text-anchor="end" font-family="Liberation Sans" font-size="14" fill="#cfcfd4">0.4</text>
<text x="312.2" y="901.0" text-anchor="end" font-family="Liberation Sans" font-size="14" fill="#cfcfd4">0.5</text>
<text x="287.8" y="882.3" text-anchor="end" font-family="Liberation Sans" font-size="14" fill="#cfcfd4">0.6</text>
<text x="263.8" y="863.8" text-anchor="end" font-family="Liberation Sans" font-size="14" fill="#cfcfd4">0.7</text>
<text x="240.2" y="845.7" text-anchor="end" font-family="Liberation Sans" font-size="14" fill="#cfcfd4">0.8</text>
<text x="216.9" y="827.8" text-anchor="end" font-family="Liberation Sans" font-size="14" fill="#cfcfd4">0.9</text>
<text x="193.9" y="810.2" text-anchor="end" font-family="Liberation Sans" font-size="14" fill="#cfcfd4">1</text>
<text x="465.1" y="1003.0" text-anchor="start" font-family="Liberation Sans" font-size="14" fill="#cfcfd4">0</text>
<text x="535.1" y="971.9" text-anchor="start" font-family="Liberation Sans" font-size="14" fill="#cfcfd4">0.2</text>
<text x="603.5" y="941.6" text-anchor="start" font-family="Liberation Sans" font-size="14" fill="#cfcfd4">0.4</text>
<text x="670.2" y="912.1" text-anchor="start" font-family="Liberation Sans" font-size="14" fill="#cfcfd4">0.6</text>
<text x="735.3" y="883.2" text-anchor="start" font-family="Liberation Sans" font-size="14" fill="#cfcfd4">0.8</text>
<text x="798.8" y="855.0" text-anchor="start" font-family="Liberation Sans" font-size="14" fill="#cfcfd4">1</text>
</svg>
<svg class="a" style="left:0;top:0" width="2046" height="1092" viewBox="0 0 2046 1092">
<polygon points="1313.50,497.50 1313.50,291.50 1503.50,219.00 1648.50,312.90 1648.50,518.90 1458.50,591.40" fill="#fff"/>
<line x1="1313.50" y1="497.50" x2="1503.50" y2="425.00" stroke="#dbdbdb" stroke-width="1"/>
<line x1="1648.50" y1="518.90" x2="1503.50" y2="425.00" stroke="#dbdbdb" stroke-width="1"/>
<line x1="1313.50" y1="456.30" x2="1503.50" y2="383.80" stroke="#dbdbdb" stroke-width="1"/>
<line x1="1648.50" y1="477.70" x2="1503.50" y2="383.80" stroke="#dbdbdb" stroke-width="1"/>
<line x1="1313.50" y1="415.10" x2="1503.50" y2="342.60" stroke="#dbdbdb" stroke-width="1"/>
<line x1="1648.50" y1="436.50" x2="1503.50" y2="342.60" stroke="#dbdbdb" stroke-width="1"/>
<line x1="1313.50" y1="373.90" x2="1503.50" y2="301.40" stroke="#dbdbdb" stroke-width="1"/>
<line x1="1648.50" y1="395.30" x2="1503.50" y2="301.40" stroke="#dbdbdb" stroke-width="1"/>
<line x1="1313.50" y1="332.70" x2="1503.50" y2="260.20" stroke="#dbdbdb" stroke-width="1"/>
<line x1="1648.50" y1="354.10" x2="1503.50" y2="260.20" stroke="#dbdbdb" stroke-width="1"/>
<line x1="1313.50" y1="291.50" x2="1503.50" y2="219.00" stroke="#dbdbdb" stroke-width="1"/>
<line x1="1648.50" y1="312.90" x2="1503.50" y2="219.00" stroke="#dbdbdb" stroke-width="1"/>
<line x1="1313.50" y1="497.50" x2="1313.50" y2="291.50" stroke="#dbdbdb" stroke-width="1"/>
<line x1="1458.50" y1="591.40" x2="1313.50" y2="497.50" stroke="#dbdbdb" stroke-width="1"/>
<line x1="1408.50" y1="461.25" x2="1408.50" y2="255.25" stroke="#dbdbdb" stroke-width="1"/>
<line x1="1553.50" y1="555.15" x2="1408.50" y2="461.25" stroke="#dbdbdb" stroke-width="1"/>
<line x1="1503.50" y1="425.00" x2="1503.50" y2="219.00" stroke="#dbdbdb" stroke-width="1"/>
<line x1="1648.50" y1="518.90" x2="1503.50" y2="425.00" stroke="#dbdbdb" stroke-width="1"/>
<line x1="1648.50" y1="518.90" x2="1648.50" y2="312.90" stroke="#dbdbdb" stroke-width="1"/>
<line x1="1458.50" y1="591.40" x2="1648.50" y2="518.90" stroke="#dbdbdb" stroke-width="1"/>
<line x1="1619.50" y1="500.12" x2="1619.50" y2="294.12" stroke="#dbdbdb" stroke-width="1"/>
<line x1="1429.50" y1="572.62" x2="1619.50" y2="500.12" stroke="#dbdbdb" stroke-width="1"/>
<line x1="1590.50" y1="481.34" x2="1590.50" y2="275.34" stroke="#dbdbdb" stroke-width="1"/>
<line x1="1400.50" y1="553.84" x2="1590.50" y2="481.34" stroke="#dbdbdb" stroke-width="1"/>
<line x1="1561.50" y1="462.56" x2="1561.50" y2="256.56" stroke="#dbdbdb" stroke-width="1"/>
<line x1="1371.50" y1="535.06" x2="1561.50" y2="462.56" stroke="#dbdbdb" stroke-width="1"/>
<line x1="1532.50" y1="443.78" x2="1532.50" y2="237.78" stroke="#dbdbdb" stroke-width="1"/>
<line x1="1342.50" y1="516.28" x2="1532.50" y2="443.78" stroke="#dbdbdb" stroke-width="1"/>
<line x1="1503.50" y1="425.00" x2="1503.50" y2="219.00" stroke="#dbdbdb" stroke-width="1"/>
<line x1="1313.50" y1="497.50" x2="1503.50" y2="425.00" stroke="#dbdbdb" stroke-width="1"/>
<line x1="1313.50" y1="497.50" x2="1313.50" y2="291.50" stroke="#262626" stroke-width="1.1"/>
<line x1="1458.50" y1="591.40" x2="1313.50" y2="497.50" stroke="#262626" stroke-width="1.1"/>
<line x1="1458.50" y1="591.40" x2="1648.50" y2="518.90" stroke="#262626" stroke-width="1.1"/>
<line x1="1313.50" y1="497.50" x2="1309.30" y2="494.78" stroke="#262626" stroke-width="1.1"/>
<line x1="1313.50" y1="456.30" x2="1309.30" y2="453.58" stroke="#262626" stroke-width="1.1"/>
<line x1="1313.50" y1="415.10" x2="1309.30" y2="412.38" stroke="#262626" stroke-width="1.1"/>
<line x1="1313.50" y1="373.90" x2="1309.30" y2="371.18" stroke="#262626" stroke-width="1.1"/>
<line x1="1313.50" y1="332.70" x2="1309.30" y2="329.98" stroke="#262626" stroke-width="1.1"/>
<line x1="1313.50" y1="291.50" x2="1309.30" y2="288.78" stroke="#262626" stroke-width="1.1"/>
<line x1="1458.50" y1="591.40" x2="1453.83" y2="593.18" stroke="#262626" stroke-width="1.1"/>
<line x1="1429.50" y1="572.62" x2="1424.83" y2="574.40" stroke="#262626" stroke-width="1.1"/>
<line x1="1400.50" y1="553.84" x2="1395.83" y2="555.62" stroke="#262626" stroke-width="1.1"/>
<line x1="1371.50" y1="535.06" x2="1366.83" y2="536.84" stroke="#262626" stroke-width="1.1"/>
<line x1="1342.50" y1="516.28" x2="1337.83" y2="518.06" stroke="#262626" stroke-width="1.1"/>
<line x1="1313.50" y1="497.50" x2="1308.83" y2="499.28" stroke="#262626" stroke-width="1.1"/>
<line x1="1458.50" y1="591.40" x2="1462.70" y2="594.12" stroke="#262626" stroke-width="1.1"/>
<line x1="1553.50" y1="555.15" x2="1557.70" y2="557.87" stroke="#262626" stroke-width="1.1"/>
<line x1="1648.50" y1="518.90" x2="1652.70" y2="521.62" stroke="#262626" stroke-width="1.1"/>
<text x="1306.3" y="496.3" text-anchor="end" font-family="Liberation Sans" font-size="12" fill="#404040">0</text>
<text x="1306.3" y="455.1" text-anchor="end" font-family="Liberation Sans" font-size="12" fill="#404040">0.2</text>
<text x="1306.3" y="413.9" text-anchor="end" font-family="Liberation Sans" font-size="12" fill="#404040">0.4</text>
<text x="1306.3" y="372.7" text-anchor="end" font-family="Liberation Sans" font-size="12" fill="#404040">0.6</text>
<text x="1306.3" y="331.5" text-anchor="end" font-family="Liberation Sans" font-size="12" fill="#404040">0.8</text>
<text x="1306.3" y="290.3" text-anchor="end" font-family="Liberation Sans" font-size="12" fill="#404040">1</text>
<text x="1449.8" y="605.5" text-anchor="end" font-family="Liberation Sans" font-size="12" fill="#404040">0</text>
<text x="1420.8" y="586.7" text-anchor="end" font-family="Liberation Sans" font-size="12" fill="#404040">0.2</text>
<text x="1391.8" y="567.9" text-anchor="end" font-family="Liberation Sans" font-size="12" fill="#404040">0.4</text>
<text x="1362.8" y="549.1" text-anchor="end" font-family="Liberation Sans" font-size="12" fill="#404040">0.6</text>
<text x="1333.8" y="530.4" text-anchor="end" font-family="Liberation Sans" font-size="12" fill="#404040">0.8</text>
<text x="1304.8" y="511.6" text-anchor="end" font-family="Liberation Sans" font-size="12" fill="#404040">1</text>
<text x="1465.4" y="607.0" text-anchor="start" font-family="Liberation Sans" font-size="12" fill="#404040">0</text>
<text x="1560.4" y="570.8" text-anchor="start" font-family="Liberation Sans" font-size="12" fill="#404040">0.5</text>
<text x="1655.4" y="534.5" text-anchor="start" font-family="Liberation Sans" font-size="12" fill="#404040">1</text>
<text x="0" y="4.7" transform="translate(1125 395) rotate(-90)" text-anchor="middle" font-family="Liberation Sans" font-size="13" fill="#404040">Z</text>
<text x="1229.0" y="599.7" text-anchor="middle" font-family="Liberation Sans" font-size="13" fill="#404040">Y</text>
<text x="1394.0" y="605.2" text-anchor="middle" font-family="Liberation Sans" font-size="13" fill="#404040">X</text>
</svg>
<svg class="a" style="left:0;top:0" width="2046" height="1092" viewBox="0 0 2046 1092">
<polygon points="1313.50,971.50 1313.50,764.80 1503.50,692.30 1648.50,786.20 1648.50,992.90 1458.50,1065.40" fill="#fff"/>
<line x1="1313.50" y1="971.50" x2="1503.50" y2="899.00" stroke="#dbdbdb" stroke-width="1"/>
<line x1="1648.50" y1="992.90" x2="1503.50" y2="899.00" stroke="#dbdbdb" stroke-width="1"/>
<line x1="1313.50" y1="919.83" x2="1503.50" y2="847.33" stroke="#dbdbdb" stroke-width="1"/>
<line x1="1648.50" y1="941.23" x2="1503.50" y2="847.33" stroke="#dbdbdb" stroke-width="1"/>
<line x1="1313.50" y1="868.15" x2="1503.50" y2="795.65" stroke="#dbdbdb" stroke-width="1"/>
<line x1="1648.50" y1="889.55" x2="1503.50" y2="795.65" stroke="#dbdbdb" stroke-width="1"/>
<line x1="1313.50" y1="816.48" x2="1503.50" y2="743.98" stroke="#dbdbdb" stroke-width="1"/>
<line x1="1648.50" y1="837.88" x2="1503.50" y2="743.98" stroke="#dbdbdb" stroke-width="1"/>
<line x1="1313.50" y1="764.80" x2="1503.50" y2="692.30" stroke="#dbdbdb" stroke-width="1"/>
<line x1="1648.50" y1="786.20" x2="1503.50" y2="692.30" stroke="#dbdbdb" stroke-width="1"/>
<line x1="1313.50" y1="971.50" x2="1313.50" y2="764.80" stroke="#dbdbdb" stroke-width="1"/>
<line x1="1458.50" y1="1065.40" x2="1313.50" y2="971.50" stroke="#dbdbdb" stroke-width="1"/>
<line x1="1361.00" y1="953.38" x2="1361.00" y2="746.68" stroke="#dbdbdb" stroke-width="1"/>
<line x1="1506.00" y1="1047.28" x2="1361.00" y2="953.38" stroke="#dbdbdb" stroke-width="1"/>
<line x1="1408.50" y1="935.25" x2="1408.50" y2="728.55" stroke="#dbdbdb" stroke-width="1"/>
<line x1="1553.50" y1="1029.15" x2="1408.50" y2="935.25" stroke="#dbdbdb" stroke-width="1"/>
<line x1="1456.00" y1="917.13" x2="1456.00" y2="710.43" stroke="#dbdbdb" stroke-width="1"/>
<line x1="1601.00" y1="1011.03" x2="1456.00" y2="917.13" stroke="#dbdbdb" stroke-width="1"/>
<line x1="1503.50" y1="899.00" x2="1503.50" y2="692.30" stroke="#dbdbdb" stroke-width="1"/>
<line x1="1648.50" y1="992.90" x2="1503.50" y2="899.00" stroke="#dbdbdb" stroke-width="1"/>
<line x1="1648.50" y1="992.90" x2="1648.50" y2="786.20" stroke="#dbdbdb" stroke-width="1"/>
<line x1="1458.50" y1="1065.40" x2="1648.50" y2="992.90" stroke="#dbdbdb" stroke-width="1"/>
<line x1="1612.25" y1="969.43" x2="1612.25" y2="762.73" stroke="#dbdbdb" stroke-width="1"/>
<line x1="1422.25" y1="1041.93" x2="1612.25" y2="969.43" stroke="#dbdbdb" stroke-width="1"/>
<line x1="1576.00" y1="945.95" x2="1576.00" y2="739.25" stroke="#dbdbdb" stroke-width="1"/>
<line x1="1386.00" y1="1018.45" x2="1576.00" y2="945.95" stroke="#dbdbdb" stroke-width="1"/>
<line x1="1539.75" y1="922.48" x2="1539.75" y2="715.78" stroke="#dbdbdb" stroke-width="1"/>
<line x1="1349.75" y1="994.98" x2="1539.75" y2="922.48" stroke="#dbdbdb" stroke-width="1"/>
<line x1="1503.50" y1="899.00" x2="1503.50" y2="692.30" stroke="#dbdbdb" stroke-width="1"/>
<line x1="1313.50" y1="971.50" x2="1503.50" y2="899.00" stroke="#dbdbdb" stroke-width="1"/>
<line x1="1313.50" y1="971.50" x2="1313.50" y2="764.80" stroke="#262626" stroke-width="1.1"/>
<line x1="1458.50" y1="1065.40" x2="1313.50" y2="971.50" stroke="#262626" stroke-width="1.1"/>
<line x1="1458.50" y1="1065.40" x2="1648.50" y2="992.90" stroke="#262626" stroke-width="1.1"/>
<line x1="1313.50" y1="971.50" x2="1309.30" y2="968.78" stroke="#262626" stroke-width="1.1"/>
<line x1="1313.50" y1="919.83" x2="1309.30" y2="917.11" stroke="#262626" stroke-width="1.1"/>
<line x1="1313.50" y1="868.15" x2="1309.30" y2="865.43" stroke="#262626" stroke-width="1.1"/>
<line x1="1313.50" y1="816.48" x2="1309.30" y2="813.76" stroke="#262626" stroke-width="1.1"/>
<line x1="1313.50" y1="764.80" x2="1309.30" y2="762.08" stroke="#262626" stroke-width="1.1"/>
<line x1="1458.50" y1="1065.40" x2="1453.83" y2="1067.18" stroke="#262626" stroke-width="1.1"/>
<line x1="1422.25" y1="1041.93" x2="1417.58" y2="1043.71" stroke="#262626" stroke-width="1.1"/>
<line x1="1386.00" y1="1018.45" x2="1381.33" y2="1020.23" stroke="#262626" stroke-width="1.1"/>
<line x1="1349.75" y1="994.98" x2="1345.08" y2="996.76" stroke="#262626" stroke-width="1.1"/>
<line x1="1313.50" y1="971.50" x2="1308.83" y2="973.28" stroke="#262626" stroke-width="1.1"/>
<line x1="1458.50" y1="1065.40" x2="1462.70" y2="1068.12" stroke="#262626" stroke-width="1.1"/>
<line x1="1506.00" y1="1047.28" x2="1510.20" y2="1049.99" stroke="#262626" stroke-width="1.1"/>
<line x1="1553.50" y1="1029.15" x2="1557.70" y2="1031.87" stroke="#262626" stroke-width="1.1"/>
<line x1="1601.00" y1="1011.03" x2="1605.20" y2="1013.74" stroke="#262626" stroke-width="1.1"/>
<line x1="1648.50" y1="992.90" x2="1652.70" y2="995.62" stroke="#262626" stroke-width="1.1"/>
<text x="1306.3" y="970.3" text-anchor="end" font-family="Liberation Sans" font-size="12" fill="#404040">-1</text>
<text x="1306.3" y="918.6" text-anchor="end" font-family="Liberation Sans" font-size="12" fill="#404040">-0.5</text>
<text x="1306.3" y="866.9" text-anchor="end" font-family="Liberation Sans" font-size="12" fill="#404040">0</text>
<text x="1306.3" y="815.3" text-anchor="end" font-family="Liberation Sans" font-size="12" fill="#404040">0.5</text>
<text x="1306.3" y="763.6" text-anchor="end" font-family="Liberation Sans" font-size="12" fill="#404040">1</text>
<text x="1449.8" y="1079.5" text-anchor="end" font-family="Liberation Sans" font-size="12" fill="#404040">-1</text>
<text x="1413.6" y="1056.0" text-anchor="end" font-family="Liberation Sans" font-size="12" fill="#404040">-0.5</text>
<text x="1377.3" y="1032.5" text-anchor="end" font-family="Liberation Sans" font-size="12" fill="#404040">0</text>
<text x="1341.1" y="1009.1" text-anchor="end" font-family="Liberation Sans" font-size="12" fill="#404040">0.5</text>
<text x="1304.8" y="985.6" text-anchor="end" font-family="Liberation Sans" font-size="12" fill="#404040">1</text>
<text x="1465.4" y="1081.0" text-anchor="start" font-family="Liberation Sans" font-size="12" fill="#404040">-1</text>
<text x="1512.9" y="1062.9" text-anchor="start" font-family="Liberation Sans" font-size="12" fill="#404040">-0.5</text>
<text x="1560.4" y="1044.8" text-anchor="start" font-family="Liberation Sans" font-size="12" fill="#404040">0</text>
<text x="1607.9" y="1026.6" text-anchor="start" font-family="Liberation Sans" font-size="12" fill="#404040">0.5</text>
<text x="1655.4" y="1008.5" text-anchor="start" font-family="Liberation Sans" font-size="12" fill="#404040">1</text>
<text x="0" y="4.7" transform="translate(1120 878) rotate(-90)" text-anchor="middle" font-family="Liberation Sans" font-size="13" fill="#404040">Z</text>
<text x="1224.0" y="1074.7" text-anchor="middle" font-family="Liberation Sans" font-size="13" fill="#404040">Y</text>
<text x="1399.0" y="1080.7" text-anchor="middle" font-family="Liberation Sans" font-size="13" fill="#404040">X</text>
</svg>
<svg class="a" style="left:1512px;top:690px" width="162" height="22" viewBox="1512 690 162 22">
<rect x="1512.7" y="691" width="160" height="20.5" fill="#f4f4f4"/>
<g fill="none" stroke="#6b6b6b" stroke-width="1.1" stroke-linejoin="miter">
<path d="M1514.5 702.5 L1514.5 707.5 L1525.5 707.5 L1525.5 703.5 L1521 703.5"/>
<path d="M1516.8 704.5 C1516.5 700 1519.5 697 1524.5 697.5 L1524.5 695 L1529 698.5 L1524.5 702 L1524.5 699.8 C1521 699.8 1519.5 701.5 1519 704.5 Z"/>
<path d="M1542.5 700 L1542.5 694.5 L1546.5 694.5 L1546.5 700 M1541 700.5 L1548 700.5 L1548.3 709.5 L1536 709.5 L1540.7 703 L1541 700.5 M1541 703.5 L1548 703.5"/>
<path d="M1556.5 694.5 L1569.5 694.5 L1569.5 709.5 L1556.5 709.5 L1556.5 703 L1554.8 701.7 L1556.5 700.5 Z"/>
<path d="M1559 700.5 L1567 700.5 M1559 703.5 L1567 703.5"/>
<path d="M1585.5 695.2 A7 7 0 1 0 1589 701.5"/>
<path d="M1582 698 L1585 699.5 L1585 703 L1582 704.8 L1579 703 L1579 699.5 Z M1579 699.5 L1582 701.2 L1585 699.5 M1582 701.2 L1582 704.8"/>
<path d="M1595 701 L1597 700 L1598.5 703 L1598.5 696 L1600 695.5 L1601.5 696 L1601.5 701 L1601.5 694.5 L1603 694 L1604.5 694.5 L1604.5 701 L1604.5 695.5 L1606 695.2 L1607.5 696 L1607.5 701 L1607.5 698 L1609 697.5 L1609.7 698 L1608.5 709.5 L1599.5 709.5 Z"/>
<circle cx="1620.5" cy="700.5" r="6.2"/><path d="M1624.8 704.8 L1629.8 709.8 M1617 700.5 L1624 700.5 M1620.5 697 L1620.5 704"/>
<circle cx="1640.5" cy="700.5" r="6.2"/><path d="M1644.8 704.8 L1649.8 709.8 M1637 700.5 L1644 700.5"/>
<path d="M1654 703 L1662 694.8 L1670 703 M1656.5 702 L1656.5 709.5 L1660.5 709.5 L1660.5 704.5 L1664.5 704.5 L1664.5 709.5 L1667.5 709.5 L1667.5 702"/>
</g>
<path d="M1526.5 709 L1530 709 L1530 705.2 Z" fill="#6b6b6b"/>
<path d="M1541 706.5 L1548.3 704.5 L1548.3 709.5 L1537 709.5 Z" fill="#6b6b6b"/>
<path d="M1584.5 694 L1588 694 L1587 697.5 Z" fill="#6b6b6b"/>
<path d="M1665.5 695 L1668 695 L1668 697.5 Z" fill="#6b6b6b"/>
</svg>
</body></html>
